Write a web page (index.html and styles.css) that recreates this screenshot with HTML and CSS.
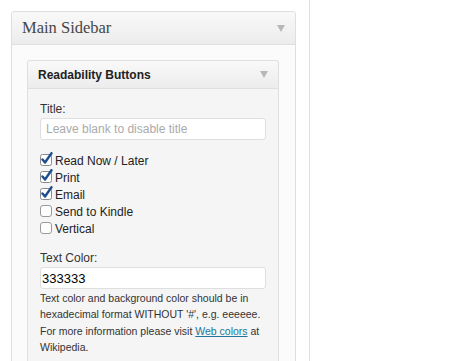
FILE: index.html
```html
<!DOCTYPE html>
<html lang="en">
<head>
    <meta charset="UTF-8">
    <title>Widgets</title>
    <link rel="stylesheet" href="styles.css">
</head>
<body>
    <div class="sidebar-col">
        <div class="sidebar">
            <div class="sidebar-head">
                <h3>Main Sidebar</h3>
                <span class="arrow"></span>
            </div>
            <div class="sidebar-body">
                <div class="widget">
                    <div class="widget-head">
                        <h4>Readability Buttons</h4>
                        <span class="arrow"></span>
                    </div>
                    <div class="widget-body">
                        <label class="field-label" for="title">Title:</label>
                        <input class="text-input" id="title" type="text" placeholder="Leave blank to disable title">

                        <div class="checks">
                            <label class="check"><span class="box on"><svg width="14" height="14" viewBox="0 0 14 14"><rect x="0.5" y="2.5" width="11" height="11" rx="2" fill="#fff" stroke="#8a8a8a"/><path d="M2.5 7.5 L5 10.5 L11.5 1.2" fill="none" stroke="#1d4f8f" stroke-width="2.4" stroke-linecap="round" stroke-linejoin="round"/></svg></span>Read Now / Later</label>
                            <label class="check"><span class="box on"><svg width="14" height="14" viewBox="0 0 14 14"><rect x="0.5" y="2.5" width="11" height="11" rx="2" fill="#fff" stroke="#8a8a8a"/><path d="M2.5 7.5 L5 10.5 L11.5 1.2" fill="none" stroke="#1d4f8f" stroke-width="2.4" stroke-linecap="round" stroke-linejoin="round"/></svg></span>Print</label>
                            <label class="check"><span class="box on"><svg width="14" height="14" viewBox="0 0 14 14"><rect x="0.5" y="2.5" width="11" height="11" rx="2" fill="#fff" stroke="#8a8a8a"/><path d="M2.5 7.5 L5 10.5 L11.5 1.2" fill="none" stroke="#1d4f8f" stroke-width="2.4" stroke-linecap="round" stroke-linejoin="round"/></svg></span>Email</label>
                            <label class="check"><span class="box"><svg width="14" height="14" viewBox="0 0 14 14"><rect x="0.5" y="2.5" width="11" height="11" rx="2.5" fill="#fdfdfd" stroke="#9a9a9a"/></svg></span>Send to Kindle</label>
                            <label class="check"><span class="box"><svg width="14" height="14" viewBox="0 0 14 14"><rect x="0.5" y="2.5" width="11" height="11" rx="2.5" fill="#fdfdfd" stroke="#9a9a9a"/></svg></span>Vertical</label>
                        </div>

                        <label class="field-label" for="color">Text Color:</label>
                        <input class="text-input value" id="color" type="text" value="333333">
                        <p class="help">Text color and background color should be in<br>
                            hexadecimal format WITHOUT '#', e.g. eeeeee.<br>
                            For more information please visit <a href="#">Web colors</a> at<br>
                            Wikipedia.</p>
                    </div>
                </div>
            </div>
        </div>
    </div>
</body>
</html>
```

FILE: styles.css
```css
html, body {
    margin: 0;
    padding: 0;
    height: 100%;
    background: #fff;
    font-family: "Liberation Sans", Arial, sans-serif;
    color: #333;
    overflow: hidden;
}
.sidebar-col {
    width: 310px;
    height: 100%;
    border-right: 1px solid #dfdfdf;
    padding: 11px 0 0 11px;
    box-sizing: border-box;
}
.sidebar {
    width: 285px;
    border: 1px solid #dfdfdf;
    border-radius: 3px;
    background: #fbfbfb;
    box-sizing: border-box;
}
.sidebar-head {
    height: 32px;
    display: flex;
    align-items: center;
    justify-content: space-between;
    padding: 0 10px;
    background: linear-gradient(to bottom, #f9f9f9, #ececec);
    border-bottom: 1px solid #dfdfdf;
    border-radius: 3px 3px 0 0;
}
.sidebar-head h3 {
    margin: 0;
    font-family: "Liberation Serif", "DejaVu Serif", serif;
    font-weight: normal;
    font-size: 16.5px;
    color: #464646;
}
.arrow {
    width: 0;
    height: 0;
    border-left: 4px solid transparent;
    border-right: 4px solid transparent;
    border-top: 7px solid #b8b8b8;
}
.sidebar-body {
    padding: 15px 16px 0 15px;
}
.widget {
    border: 1px solid #dfdfdf;
    border-bottom: none;
    border-radius: 3px 3px 0 0;
    background: #f5f5f5;
}
.widget-head {
    height: 27px;
    display: flex;
    align-items: center;
    justify-content: space-between;
    padding: 0 10px;
    background: linear-gradient(to bottom, #f9f9f9, #ececec);
    border-bottom: 1px solid #dfdfdf;
    border-radius: 3px 3px 0 0;
}
.widget-head h4 {
    margin: 0;
    font-size: 12px;
    font-weight: bold;
    color: #222;
}
.widget-body {
    padding: 12px 12px 20px 12px;
    font-size: 12px;
}
.field-label {
    display: block;
    line-height: 16px;
}
.text-input {
    display: block;
    width: 100%;
    height: 22px;
    margin: 1px 0 0 0;
    box-sizing: border-box;
    border: 1px solid #dfdfdf;
    border-radius: 3px;
    background: #fff;
    font-family: "Liberation Sans", Arial, sans-serif;
    font-size: 12px;
    padding: 0 5px;
    color: #333;
    outline: none;
}
.text-input::placeholder {
    color: #aaa;
}
.text-input.value {
    padding: 0 1px;
    font-size: 13px;
    color: #000;
}
.checks {
    margin: 12px 0 13px 0;
}
.check {
    display: flex;
    align-items: center;
    height: 17px;
    font-size: 12px;
    color: #222;
}
.box {
    display: inline-flex;
    width: 15px;
    margin-top: -3px;
}
.help {
    margin: 1px 0 0 0;
    font-size: 10.5px;
    line-height: 16.4px;
    white-space: nowrap;
    color: #333;
}
.help a {
    color: #21759b;
}
```
